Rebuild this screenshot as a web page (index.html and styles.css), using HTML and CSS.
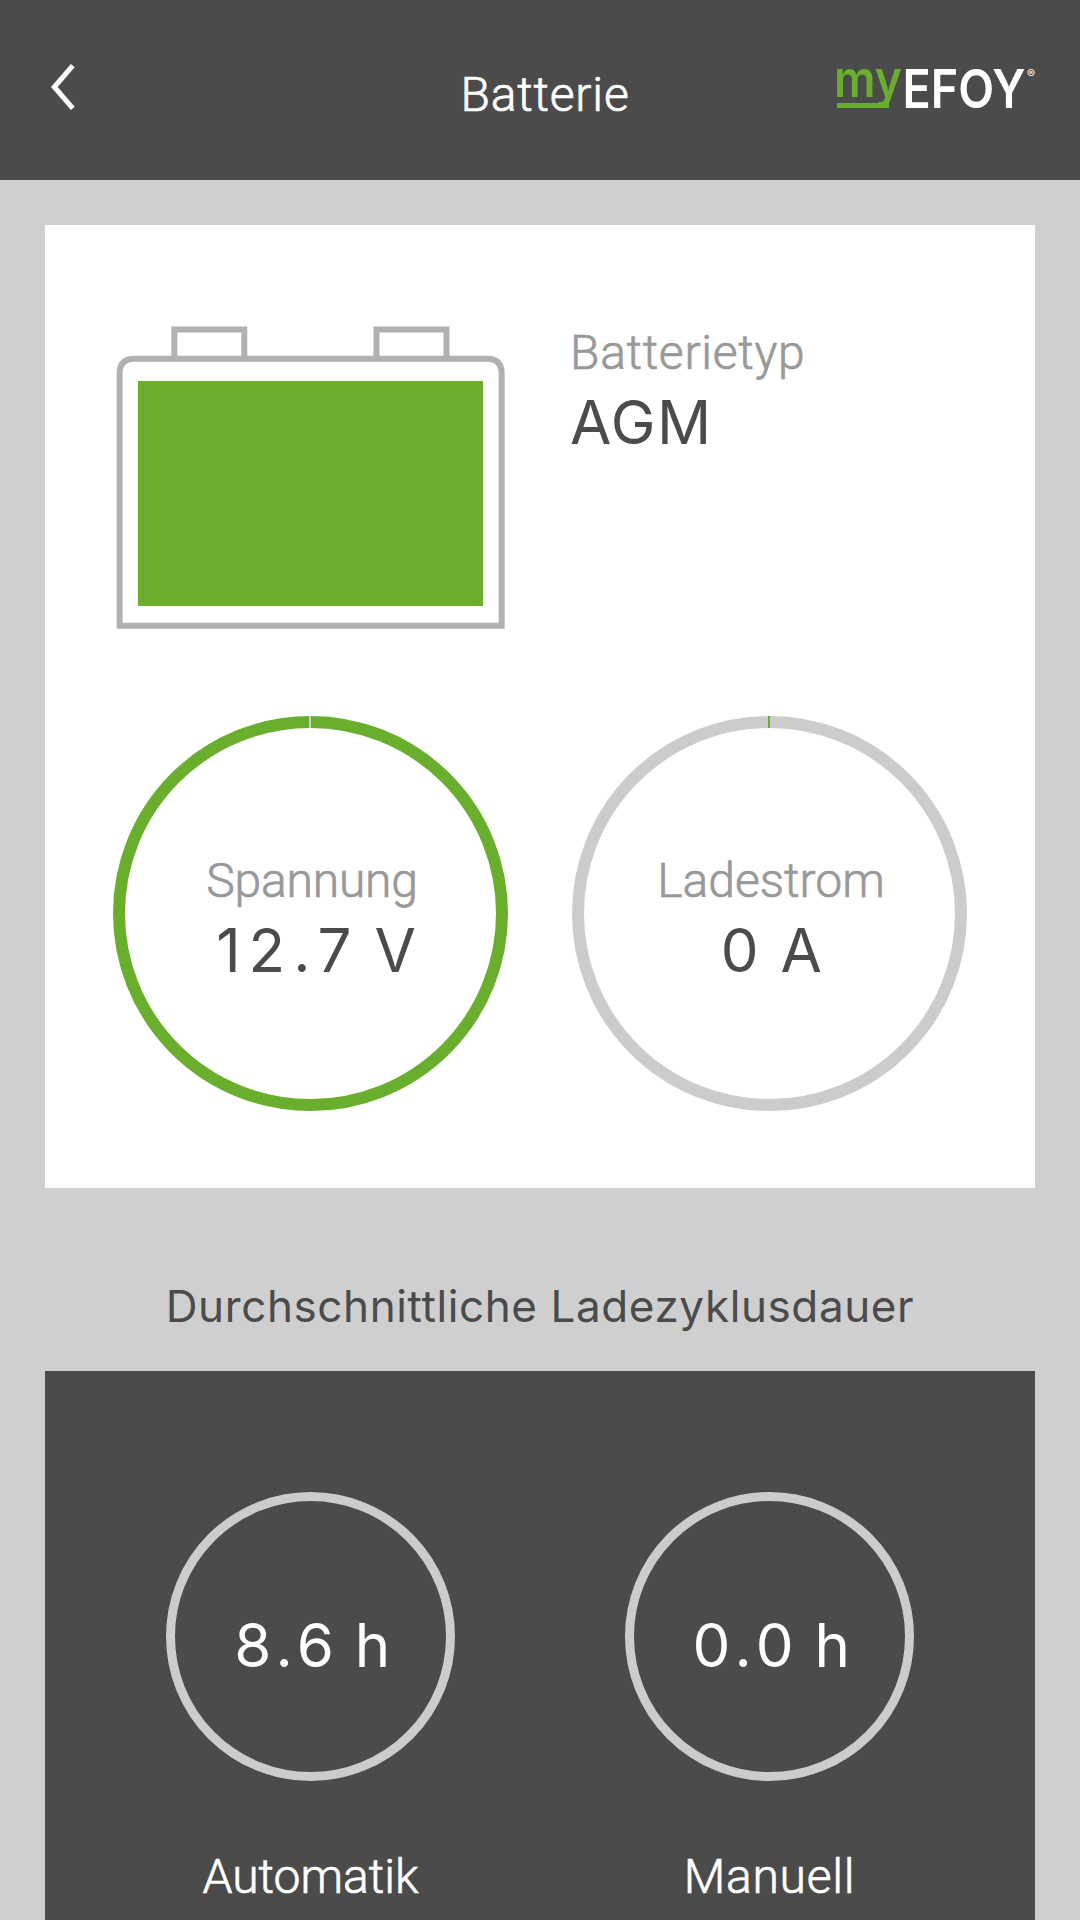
FILE: index.html
```html
<!DOCTYPE html>
<html lang="de">
<head>
<title>Batterie</title>
<meta charset="utf-8">
<link rel="stylesheet" href="styles.css">
</head>

<body>
  <header class="top">
    <a class="back" href="#" aria-label="Zurück">
      <svg width="30" height="50" viewBox="0 0 30 50"><path d="M23.8 4.7 L5.3 26 L23.8 47.3"/></svg>
    </a>
    <h1 class="title">Batterie</h1>
    <svg class="logo" width="202" height="48" viewBox="835 64 202 48">
      <text class="logoMy" x="834" y="97" textLength="68" lengthAdjust="spacingAndGlyphs">my</text>
      <path class="logoLine" d="M837 105.5 H889"/>
      <text class="logoEfoy" x="902.5" y="108" textLength="123" lengthAdjust="spacingAndGlyphs">EFOY</text>
      <text class="logoReg" x="1027" y="78">®</text>
    </svg>
  </header>

  <main>
    <section class="card">
      <div class="row info">
        <svg class="battery" width="389" height="304" viewBox="116 326 389 304">
          <path d="M174.3 358 V329.5 H244.3 V358 M376.5 358 V329.5 H446.5 V358"/>
          <path d="M119.6 625.7 V374 Q119.6 358.7 134 358.7 H487.5 Q501.7 358.7 501.7 374 V625.7 Z"/>
          <rect x="138" y="381" width="345" height="225"/>
        </svg>
        <div class="type">
          <div class="label">Batterietyp</div>
          <div class="value agm">AGM</div>
        </div>
      </div>
      <div class="row">
        <div class="ring full">
          <div class="label spannung">Spannung</div>
          <div class="value volt">12.7 V</div>
        </div>
        <div class="ring">
          <div class="label ladestrom">Ladestrom</div>
          <div class="value ampere">0 A</div>
        </div>
      </div>
    </section>

    <h2 class="heading">Durchschnittliche Ladezyklusdauer</h2>

    <section class="card dark">
      <div class="row">
        <div class="cycle">
          <div class="ring small"><div class="value hours">8.6 h</div></div>
          <div class="label automatik">Automatik</div>
        </div>
        <div class="cycle">
          <div class="ring small"><div class="value hours">0.0 h</div></div>
          <div class="label">Manuell</div>
        </div>
      </div>
    </section>
  </main>
</body>
</html>
```

FILE: styles.css
```css
* {box-sizing: border-box;}
body {margin: 0; height: 1920px; overflow: hidden;
      font-family: Roboto, "Liberation Sans", sans-serif;
      background-color: #cfcfcf; color: #4b4b4b;
}
h1, h2 {margin: 0; font-weight: 400;}

/* header */
.top {height: 180px; padding: 61px 43px 0 49px;
      display: grid; grid-template-columns: 202px 1fr 202px;
      background-color: #4b4b4b; color: #fff;
}
.back svg {display: block;}
.back path {fill: none; stroke: #fff; stroke-width: 5;}
.title {padding: 4px 0 0 4px; font-size: 48px; line-height: 60px;
        font-weight: 300; letter-spacing: 0.8px; text-align: center;
        -webkit-text-stroke: 0.7px;
}
.logo {margin-top: 3px; overflow: visible;}
.logoMy {font: 600 51px Inter, sans-serif; fill: #69af2d;}
.logoLine {fill: none; stroke: #69af2d; stroke-width: 5;}
.logoEfoy {font: 600 53px Inter, sans-serif; fill: #fff;}
.logoReg {font: 12px Inter, sans-serif; fill: #fff;}

/* cards */
.card {height: 963px; margin: 45px 45px 0; padding: 101px 36px 0;
       background-color: #fff;
}
.row {display: grid; grid-template-columns: 459px 459px; justify-items: center;}
.label {font-size: 48px; line-height: 60px; font-weight: 300; letter-spacing: 0.7px;
        color: #999; white-space: nowrap;
        -webkit-text-stroke: 0.7px;
}
.value {font-family: Inter, "Liberation Sans", sans-serif;
        font-size: 60px; line-height: 60px; white-space: nowrap;
}

.info {height: 390px;}
.battery path {fill: none; stroke: #b1b1b1; stroke-width: 6;}
.battery rect {fill: #69af2d;}
.type {justify-self: start; padding-left: 30px; margin-top: -3px;}
.agm {margin-top: 9px; letter-spacing: 1.5px;}

/* gauges */
.ring {width: 395px; height: 395px; padding-top: 123px;
       border: 12px solid #ccc; border-radius: 50%;
       display: flex; flex-direction: column; align-items: center;
       position: relative;
}
.ring .value {margin-top: 9px;}
.ring::before {content: ""; width: 2px; height: 12px;
               position: absolute; left: 184px; top: -12px;
               background-color: #69af2d;
}
.full {border-color: #69af2d;}
.full::before {background-color: #ccc;}
.spannung {padding-left: 3px; letter-spacing: -0.2px;}
.ladestrom {padding-left: 3px; letter-spacing: 0;}
.volt {padding-left: 19px; letter-spacing: 8px; word-spacing: -10px;}
.ampere {padding-left: 6px; letter-spacing: 2.5px;}
.hours {padding-left: 9px; letter-spacing: 5.5px; word-spacing: -7px;}

.heading {height: 183px; padding-top: 88px; text-align: center;
          font-family: Inter, "Liberation Sans", sans-serif;
          font-size: 44px; line-height: 60px; letter-spacing: 0.6px;
          white-space: nowrap;
}

.dark {height: 549px; margin-top: 0; padding-top: 121px;
       background-color: #4b4b4b;
}
.dark .label, .dark .value {color: #fff;}
.cycle {display: flex; flex-direction: column; align-items: center;}
.small {width: 289px; height: 289px; padding-top: 105px; border-width: 9px;}
.small::before {display: none;}
.cycle .label {margin-top: 66px;}
.automatik {letter-spacing: 0;}
```
